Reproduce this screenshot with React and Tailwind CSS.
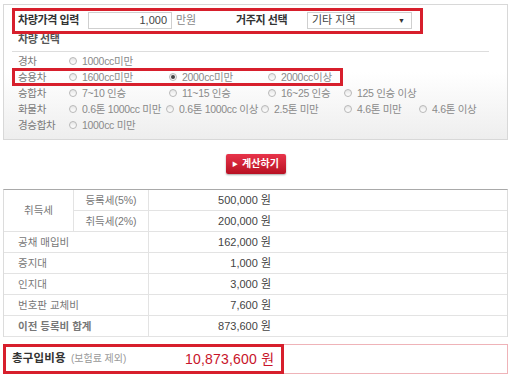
import React from "react";

const F = { fontFamily: '"Liberation Sans", "Noto Sans CJK KR", sans-serif' };

function Radio({ checked }) {
  return (
    <span className="relative inline-block w-[8px] h-[8px] rounded-full border border-[#b8b8b8] bg-gradient-to-b from-[#e6e6e6] to-white shrink-0">
      {checked && (
        <span className="absolute left-[1px] top-[1px] w-[4px] h-[4px] rounded-full bg-[#444]" />
      )}
    </span>
  );
}

function Opt({ label, w, checked }) {
  return (
    <div className={`flex items-center gap-[5px] shrink-0 ${w}`}>
      <Radio checked={checked} />
      <span className="whitespace-nowrap">{label}</span>
    </div>
  );
}

function Row({ label, children }) {
  return (
    <div className="flex items-center h-[16px] text-[10.5px] tracking-[-0.3px] text-[#8a8a8a] leading-none">
      <div className="w-[51px] shrink-0 text-[#7a7a7a]">{label}</div>
      {children}
    </div>
  );
}

function Cell({ children, className = "" }) {
  return (
    <div className={`flex items-center border-b border-[#e3e3e3] text-[10.5px] text-[#777] ${className}`}>
      {children}
    </div>
  );
}

function Val({ v }) {
  return (
    <div className="flex items-center border-b border-[#e3e3e3] text-[11px] text-[#444]">
      <div className="w-[122px] text-right">{v}</div>
    </div>
  );
}

export default function App() {
  return (
    <div style={F} className="w-[511px] h-[383px] bg-white overflow-hidden pt-[4px]">
      {/* Top panel */}
      <div className="relative mx-[3px] h-[136px] border border-[#d8d8d8] bg-gradient-to-b from-white via-white to-[#eeeeee]">
        <div className="flex items-center h-[18px] mt-[6px] pl-[14px] text-[11px] leading-none">
          <div className="w-[70px] font-bold text-[#333] tracking-[-0.4px]">차량가격 입력</div>
          <div className="w-[84px] h-[17px] border border-[#cfcfcf] bg-white flex items-center justify-end pr-[4px] text-[#444]">
            1,000
          </div>
          <div className="w-[64px] pl-[4px] text-[#888]">만원</div>
          <div className="w-[71px] font-bold text-[#333] tracking-[-0.4px]">거주지 선택</div>
          <div className="w-[105px] h-[17px] border border-[#cfcfcf] bg-white flex items-center justify-between pl-[4px] pr-[6px] text-[#444]">
            <span>기타 지역</span>
            <span className="text-[7px] text-[#333]">▼</span>
          </div>
        </div>
        <div className="mt-[5px] pl-[14px] h-[12px] text-[11px] leading-none font-bold text-[#555] tracking-[-0.4px]">
          차량 선택
        </div>
        <div className="ml-[8px] mt-[5px] w-[477px] h-px bg-[#dddddd]" />
        <div className="pl-[14px] mt-[1px]">
          <Row label="경차">
            <Opt label="1000cc미만" w="w-[100px]" />
          </Row>
          <Row label="승용차">
            <Opt label="1600cc미만" w="w-[100px]" />
            <Opt label="2000cc미만" w="w-[99px]" checked />
            <Opt label="2000cc이상" w="w-[76px]" />
          </Row>
          <Row label="승합차">
            <Opt label="7~10 인승" w="w-[100px]" />
            <Opt label="11~15 인승" w="w-[99px]" />
            <Opt label="16~25 인승" w="w-[76px]" />
            <Opt label="125 인승 이상" w="w-[90px]" />
          </Row>
          <Row label="화물차">
            <Opt label="0.6톤 1000cc 미만" w="w-[97px]" />
            <Opt label="0.6톤 1000cc 이상" w="w-[95px]" />
            <Opt label="2.5톤 미만" w="w-[83px]" />
            <Opt label="4.6톤 미만" w="w-[75px]" />
            <Opt label="4.6톤 이상" w="w-[70px]" />
          </Row>
          <Row label="경승합차">
            <Opt label="1000cc 미만" w="w-[100px]" />
          </Row>
        </div>
        {/* highlight boxes */}
        <div className="absolute left-[8px] top-[3px] w-[411px] h-[26px] border-[3px] border-[#d71f2c] pointer-events-none" />
        <div className="absolute left-[8px] top-[63px] w-[331px] h-[18px] border-[3px] border-[#d71f2c] pointer-events-none" />
      </div>

      {/* Button */}
      <div className="flex justify-center mt-[14px]">
        <div className="w-[60px] h-[20px] rounded-[2px] bg-gradient-to-b from-[#e8334a] to-[#b80f22] shadow-[0_1px_2px_rgba(0,0,0,0.35)] flex items-center justify-center gap-[4px] text-white text-[10px] font-bold leading-none">
          <span className="text-[6px]">▶</span>
          <span>계산하기</span>
        </div>
      </div>

      {/* Table */}
      <div className="mx-[3px] mt-[15px] border-t border-t-[#a9a9a9] border-x border-[#dcdcdc] grid grid-cols-[70px_75px_1fr] auto-rows-[21px] leading-none">
        <Cell className="row-span-2 justify-center border-r">취득세</Cell>
        <Cell className="justify-center border-r border-r-[#e3e3e3]">등록세(5%)</Cell>
        <Val v="500,000 원" />
        <Cell className="justify-center border-r border-r-[#e3e3e3]">취득세(2%)</Cell>
        <Val v="200,000 원" />
        <Cell className="col-span-2 pl-[14px] border-r">공채 매입비</Cell>
        <Val v="162,000 원" />
        <Cell className="col-span-2 pl-[14px] border-r">증지대</Cell>
        <Val v="1,000 원" />
        <Cell className="col-span-2 pl-[14px] border-r">인지대</Cell>
        <Val v="3,000 원" />
        <Cell className="col-span-2 pl-[14px] border-r">번호판 교체비</Cell>
        <Val v="7,600 원" />
        <Cell className="col-span-2 pl-[14px] border-r font-bold text-[#444]">이전 등록비 합계</Cell>
        <Val v="873,600 원" />
      </div>

      {/* Total */}
      <div className="relative mx-[3px] mt-[7px] h-[30px] border border-[#efb3b8] flex items-center leading-none">
        <div className="w-[181px] pl-[8px] flex items-baseline gap-[5px]">
          <span className="text-[11.5px] font-bold text-[#333] tracking-[0.2px]">총구입비용</span>
          <span className="text-[10px] text-[#999]">(보험료 제외)</span>
        </div>
        <span className="text-[14px] text-[#c8142a] tracking-[0.2px]">10,873,600 원</span>
        <div className="absolute -left-px -top-px w-[281px] h-[30px] border-[3px] border-[#d71f2c] pointer-events-none" />
      </div>
    </div>
  );
}
